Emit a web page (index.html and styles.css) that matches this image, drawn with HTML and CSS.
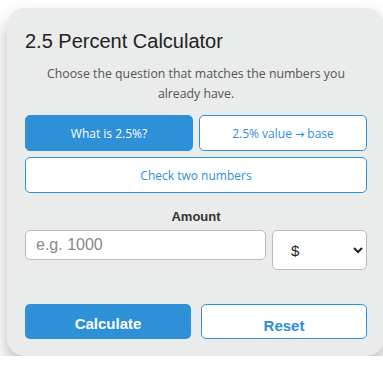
FILE: index.html
```html
<!DOCTYPE html>
<html lang="en">
<head>
    <meta charset="UTF-8">
    <meta name="viewport" content="width=device-width, initial-scale=1.0">
    <title>2.5 Percent Calculator</title>
    <link rel="stylesheet" href="styles.css">
</head>
<body>
    <div class="calculator">
        <h2 class="title">2.5 Percent Calculator</h2>
        <p class="intro">Choose the question that matches the numbers you already have.</p>

        <div class="modes">
            <button class="mode active">What is 2.5%?</button>
            <button class="mode">2.5% value <span class="arrow">&rarr;</span> base</button>
            <button class="mode wide">Check two numbers</button>
        </div>

        <label class="field-label" for="amount">Amount</label>
        <div class="amount-row">
            <input type="text" id="amount" placeholder="e.g. 1000">
            <select id="currency">
                <option>$</option>
                <option>&euro;</option>
                <option>&pound;</option>
            </select>
        </div>

        <div class="actions">
            <button class="calc-button">Calculate</button>
            <button class="reset-button">Reset</button>
        </div>
    </div>
</body>
</html>
```

FILE: styles.css
```css
* {
    margin: 0;
    padding: 0;
    box-sizing: border-box;
}

body {
    font-family: "Liberation Sans", Arial, sans-serif;
    background: #fff;
    color: #222;
}

.calculator {
    width: 377px;
    margin: 8px 0 0 7px;
    padding: 20px 17px 17px 18px;
    background: #eaebeb;
    border-radius: 18px;
    box-shadow: 0 10px 18px rgba(0, 0, 0, 0.28);
}

.title {
    font-size: 20px;
    font-weight: normal;
    line-height: 26px;
    color: #222;
}

.intro {
    margin: 10px 0 11px;
    font-family: "Open Sans", sans-serif;
    font-size: 12.3px;
    line-height: 20px;
    color: #555;
    text-align: center;
}

.modes {
    display: grid;
    grid-template-columns: 1fr 1fr;
    gap: 6px;
}

.mode {
    height: 36px;
    border: 1px solid #2e91d8;
    border-radius: 5px;
    background: #fff;
    color: #2e8fd6;
    font-family: "Open Sans", sans-serif;
    font-size: 12px;
    cursor: pointer;
}

.mode .arrow {
    font-family: "DejaVu Sans", sans-serif;
    font-size: 11px;
}

.mode.active {
    background: #2e91d8;
    color: #fff;
}

.mode.wide {
    grid-column: span 2;
}

.field-label {
    display: block;
    margin: 16px 0 5px;
    font-size: 13px;
    font-weight: bold;
    line-height: 16px;
    color: #333;
    text-align: center;
}

.amount-row {
    display: flex;
    align-items: flex-start;
    gap: 6px;
}

.amount-row input {
    flex: 1;
    height: 30px;
    padding: 0 10px;
    border: 1px solid #bcbcbc;
    border-radius: 5px;
    background: #fff;
    font-family: "Liberation Sans", Arial, sans-serif;
    font-size: 16px;
    color: #222;
}

.amount-row input::placeholder {
    color: #888;
}

.amount-row select {
    width: 95px;
    height: 40px;
    padding: 0 10px 0 14px;
    border: 1px solid #bcbcbc;
    border-radius: 5px;
    background: #fff;
    font-family: "Liberation Sans", Arial, sans-serif;
    font-size: 15px;
    color: #222;
}

.actions {
    display: grid;
    grid-template-columns: 1fr 1fr;
    gap: 10px;
    margin-top: 34px;
}

.calc-button,
.reset-button {
    height: 35px;
    border-radius: 5px;
    font-family: "Liberation Sans", Arial, sans-serif;
    font-size: 15px;
    font-weight: bold;
    cursor: pointer;
}

.calc-button {
    padding-top: 3px;
    border: none;
    background: #2e91d8;
    color: #fff;
}

.reset-button {
    padding-top: 8px;
    border: 1px solid #2e91d8;
    background: #fff;
    color: #2e8fd6;
}
```
